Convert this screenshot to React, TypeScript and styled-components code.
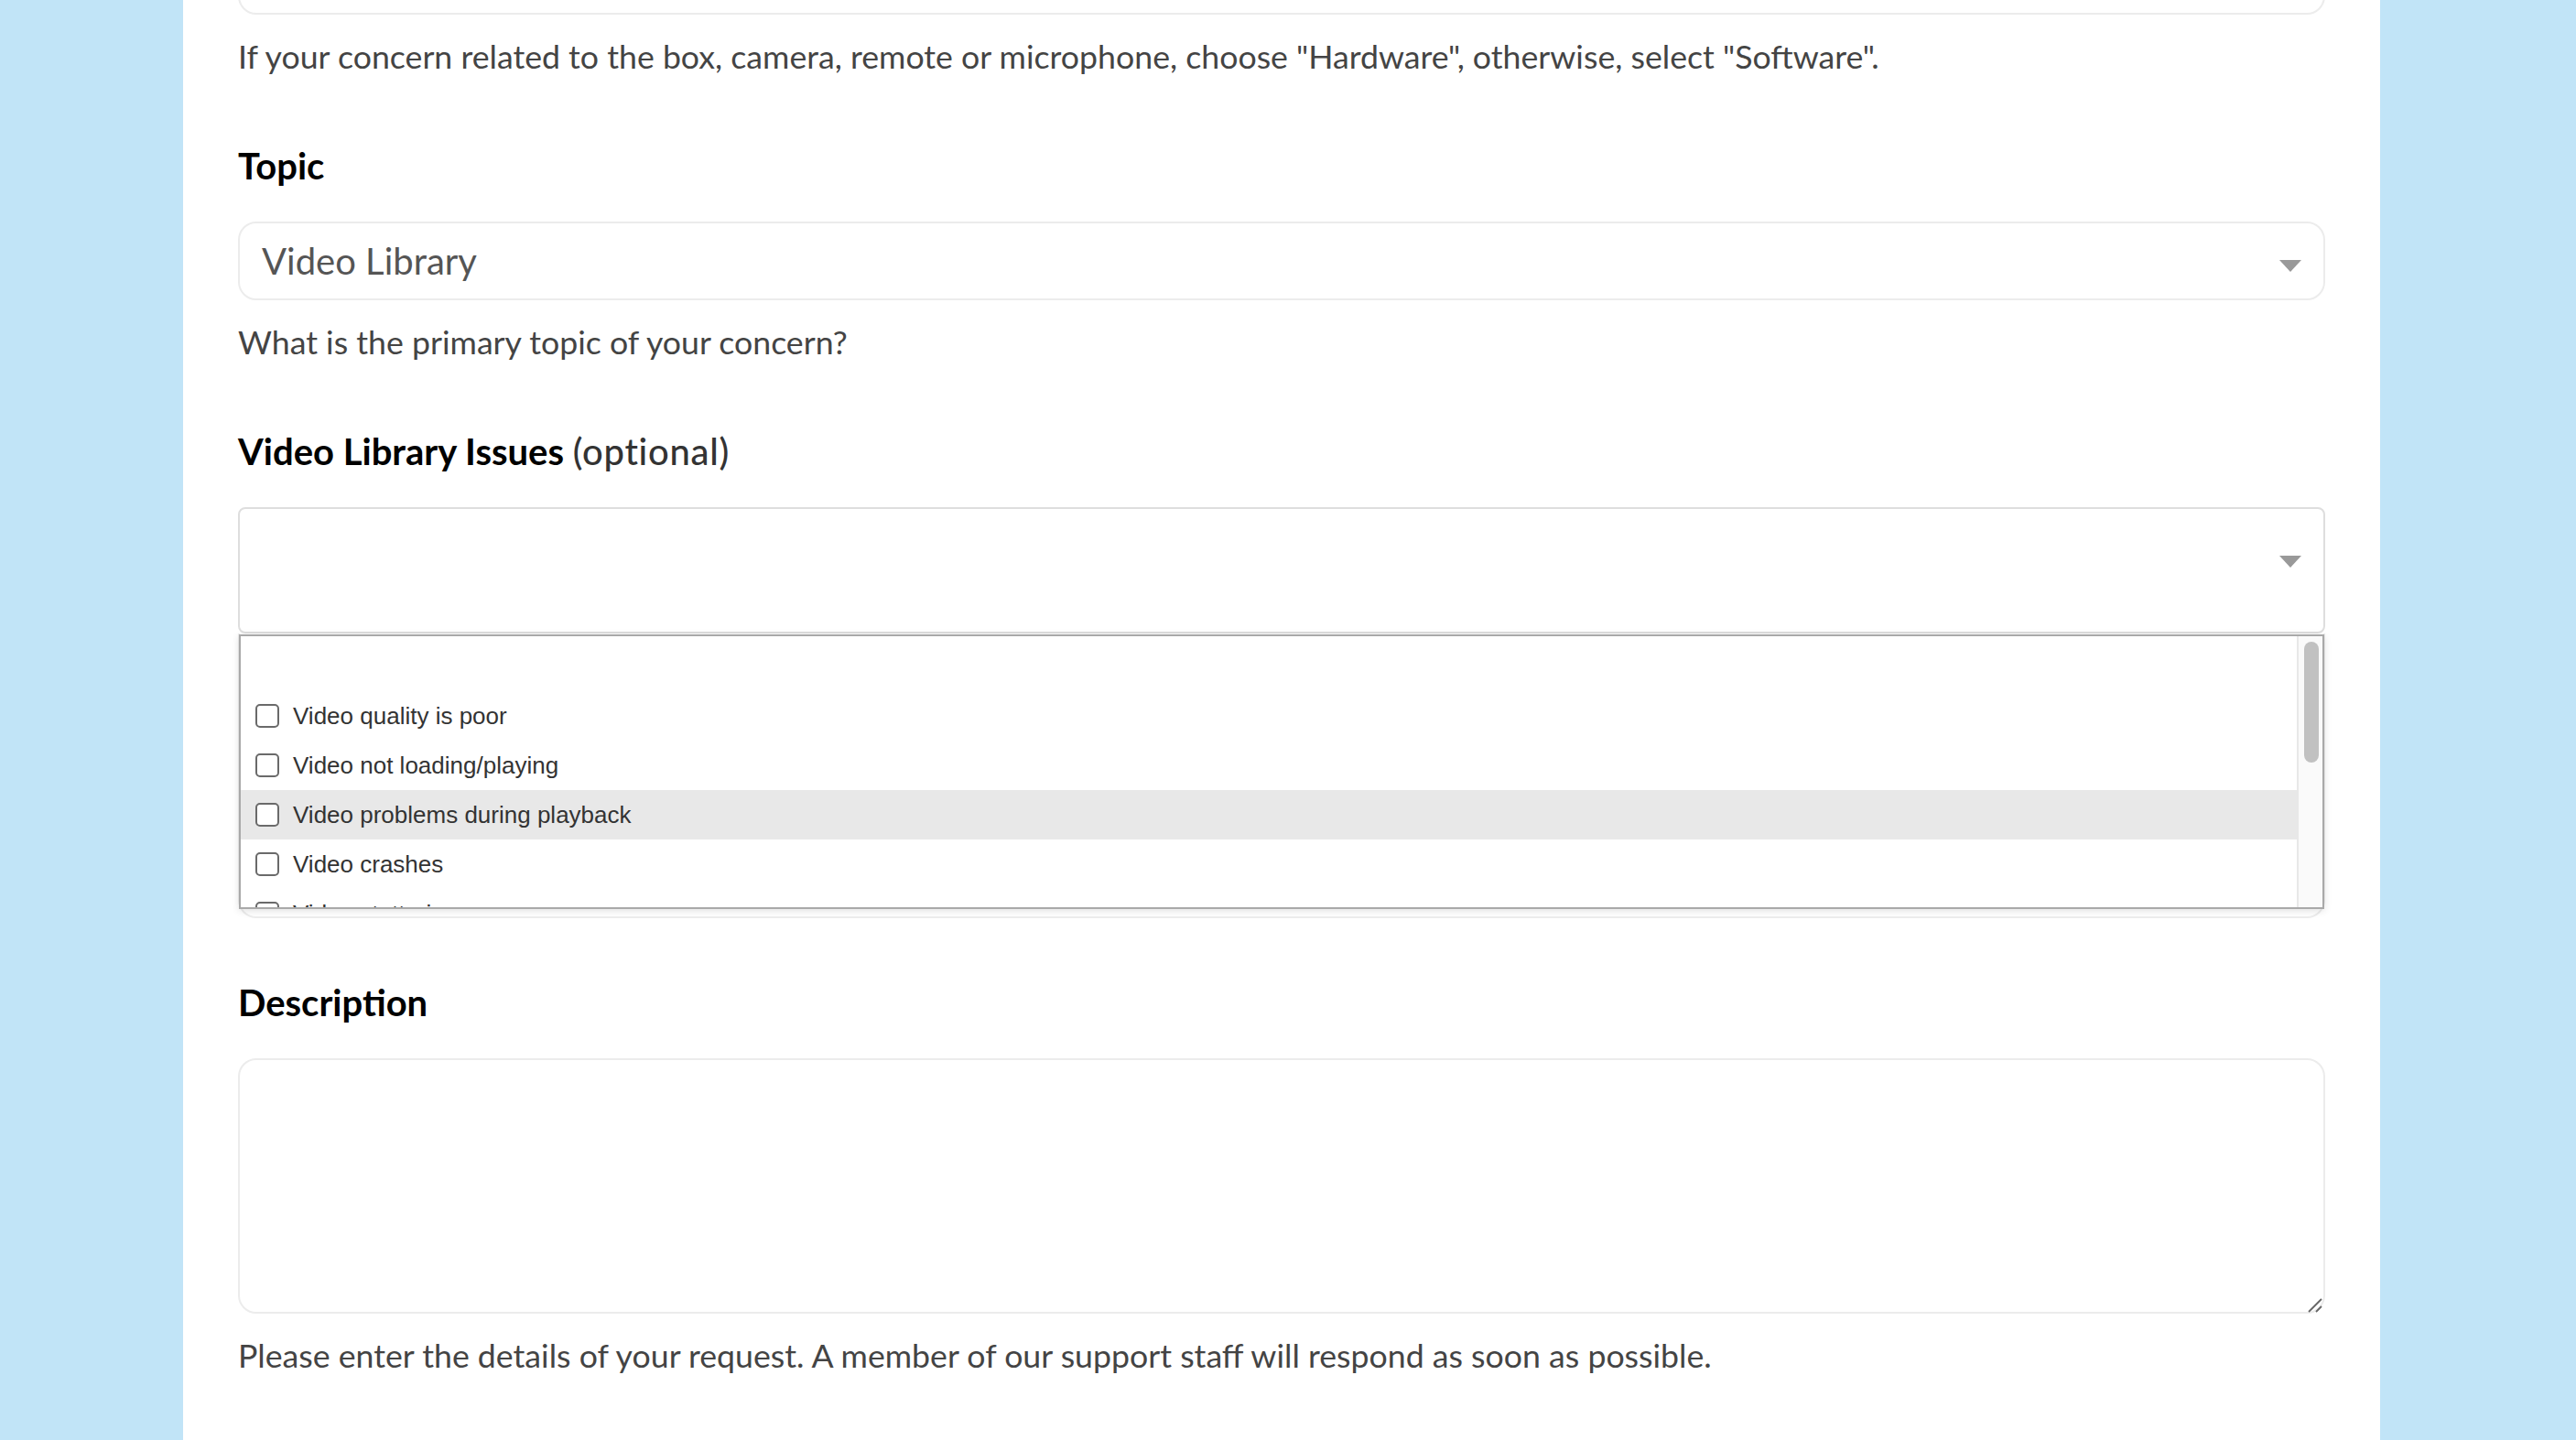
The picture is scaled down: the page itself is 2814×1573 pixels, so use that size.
import React from 'react';
import styled, { createGlobalStyle } from 'styled-components';

const GlobalStyle = createGlobalStyle`
  html, body {
    margin: 0;
    padding: 0;
    overflow: hidden;
  }
  body {
    background: #c1e4f7;
    font-family: Lato, 'Noto Sans', sans-serif;
  }
  * {
    box-sizing: border-box;
  }
`;

// Blue page with the white form sheet
const Page = styled.div`
  display: flex;
  height: 1573px;
  padding-left: 200px;
  background: #c1e4f7;
  overflow: hidden;
`;

const Sheet = styled.main`
  width: 2400px;
  background: #fff;
  padding: 0 60px;
  display: flex;
  flex-direction: column;
`;

const Field = styled.section<{ $offset?: number }>`
  display: flex;
  flex-direction: column;
  margin-top: ${p => p.$offset ?? 0}px;
  margin-bottom: 68px;
`;

const Label = styled.label`
  font-size: 40px;
  line-height: 48px;
  font-weight: 700;
  color: #000;
  margin-bottom: 37px;
`;

const Optional = styled.span`
  font-weight: 500;
  letter-spacing: 0.7px;
  color: #333;
`;

const Help = styled.p`
  margin: 19px 0 0;
  font-size: 35.7px;
  line-height: 54px;
  color: #444;
`;

// Closed select box, two looks: rounded single select and the taller multi select
const SelectBox = styled.div<{ $tall?: boolean }>`
  display: flex;
  align-items: center;
  justify-content: space-between;
  height: ${p => (p.$tall ? 138 : 86)}px;
  padding: 0 24px;
  border: 2px solid ${p => (p.$tall ? '#dedede' : '#ececec')};
  border-radius: ${p => (p.$tall ? 8 : 20)}px;
  background: #fff;
  font-size: 40px;
  color: #555;
`;

const Caret = styled.svg<{ $shift: number }>`
  width: 24px;
  height: 13px;
  flex: none;
  transform: translateY(${p => p.$shift}px);
`;

// Dropdown list of the multi select
const ListShell = styled.div`
  position: relative;
  height: 311px;
  border: 2px solid #ededed;
  border-top: none;
  border-radius: 0 0 20px 20px;
`;

const Listbox = styled.div`
  position: absolute;
  top: 1px;
  left: -1px;
  right: -1px;
  height: 300px;
  display: flex;
  background: #fff;
  border: 2px solid #a9a9a9;
  box-shadow: 0 2px 8px rgba(0, 0, 0, 0.12);
  z-index: 2;
`;

const Options = styled.ul`
  flex: 1;
  margin: 0;
  padding: 60px 0 0;
  list-style: none;
  overflow: hidden;
`;

const Option = styled.li<{ $active?: boolean }>`
  display: flex;
  align-items: center;
  gap: 15px;
  height: 54px;
  padding-left: 16px;
  background: ${p => (p.$active ? '#e8e8e8' : 'transparent')};
  font-family: 'Liberation Sans', Arial, sans-serif;
  font-size: 26px;
  color: #333;
`;

const Check = styled.input`
  appearance: none;
  width: 26px;
  height: 26px;
  margin: 0;
  flex: none;
  border: 2px solid #6a6a6a;
  border-radius: 5px;
  background: #fff;
`;

const ScrollTrack = styled.div`
  width: 28px;
  flex: none;
  padding: 6px 0 0 6px;
  background: #fafafa;
  border-left: 2px solid #e8e8e8;
`;

const ScrollThumb = styled.div`
  width: 16px;
  height: 132px;
  border-radius: 8px;
  background: #c1c1c1;
`;

// Description textarea with its resize grip
const TextWrap = styled.div`
  position: relative;
  height: 279px;
`;

const TextArea = styled.textarea`
  width: 100%;
  height: 100%;
  display: block;
  resize: none;
  border: 2px solid #ececec;
  border-radius: 20px;
  padding: 20px 24px;
  font-family: Lato, sans-serif;
  font-size: 36px;
  outline: none;
`;

const Grip = styled.svg`
  position: absolute;
  right: 3px;
  bottom: 1px;
  width: 16px;
  height: 16px;
  pointer-events: none;
`;

const issueOptions = [
  'Video quality is poor',
  'Video not loading/playing',
  'Video problems during playback',
  'Video crashes',
  'Video stuttering',
  'Video audio out of sync',
  'Video missing from library',
];

const CaretIcon: React.FC<{ shift: number }> = ({ shift }) => (
  <Caret $shift={shift} viewBox="0 0 24 13">
    <path d="M0 0 H24 L12 13 Z" fill="#999" />
  </Caret>
);

const App: React.FC = () => {
  return (
    <>
      <GlobalStyle />
      <Page>
        <Sheet>
          <Field $offset={-70}>
            <SelectBox>
              <span>Software</span>
              <CaretIcon shift={5} />
            </SelectBox>
            <Help>
              If your concern related to the box, camera, remote or microphone, choose "Hardware", otherwise, select "Software".
            </Help>
          </Field>

          <Field>
            <Label>Topic</Label>
            <SelectBox>
              <span>Video Library</span>
              <CaretIcon shift={5} />
            </SelectBox>
            <Help>What is the primary topic of your concern?</Help>
          </Field>

          <Field>
            <Label>
              Video Library Issues <Optional>(optional)</Optional>
            </Label>
            <SelectBox $tall>
              <span />
              <CaretIcon shift={-10} />
            </SelectBox>
            <ListShell>
              <Listbox>
                <Options>
                  {issueOptions.map((opt, i) => (
                    <Option key={opt} $active={i === 2}>
                      <Check type="checkbox" readOnly />
                      {opt}
                    </Option>
                  ))}
                </Options>
                <ScrollTrack>
                  <ScrollThumb />
                </ScrollTrack>
              </Listbox>
            </ListShell>
          </Field>

          <Field>
            <Label>Description</Label>
            <TextWrap>
              <TextArea />
              <Grip viewBox="0 0 16 16">
                <path d="M1 15 L15 1 M9 15 L15 9" stroke="#666" strokeWidth="1.8" />
              </Grip>
            </TextWrap>
            <Help>Please enter the details of your request. A member of our support staff will respond as soon as possible.</Help>
          </Field>
        </Sheet>
      </Page>
    </>
  );
};

export default App;
